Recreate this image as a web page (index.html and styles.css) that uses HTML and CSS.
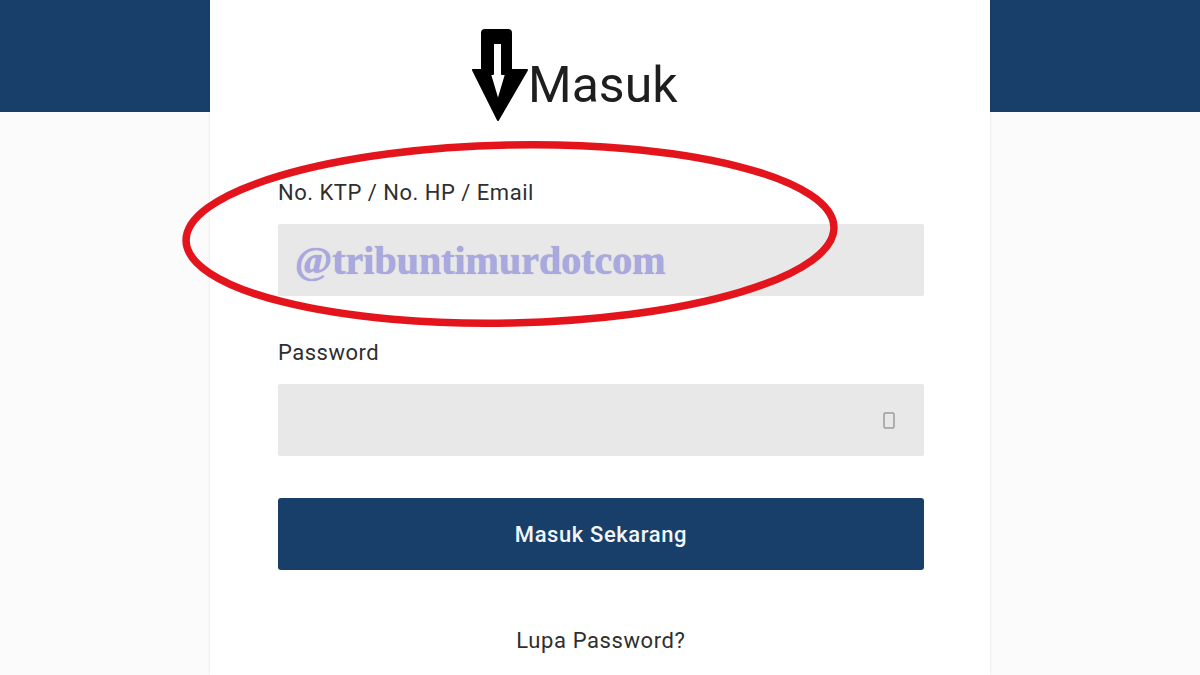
FILE: index.html
```html
<!DOCTYPE html>
<html lang="id">
<head>
    <meta charset="UTF-8">
    <meta name="viewport" content="width=device-width, initial-scale=1.0">
    <title>Masuk</title>
    <link rel="stylesheet" href="styles.css">
</head>
<body>

    <div class="page">
        <div class="card">

            <!-- Title with the pointer arrow -->
            <div class="title-row">
                <svg class="arrow" width="56" height="94" viewBox="0 0 56 94">
                    <path fill-rule="evenodd" fill="#000" stroke="#000" stroke-width="2" stroke-linejoin="round"
                          d="M13 2 H36 Q39 2 39 5 V42 H55 L26 92 L1 42 H10 V5 Q10 2 13 2 Z
                             M21 15 V46 H18 L26 73 L34 46 H30 V15 Z"/>
                </svg>
                <h1>Masuk</h1>
            </div>

            <form class="login-form">
                <label for="akun">No. KTP / No. HP / Email</label>
                <div class="field">
                    <input type="text" id="akun" name="akun" class="watermark" value="@tribuntimurdotcom">
                </div>

                <label for="password">Password</label>
                <div class="field">
                    <input type="password" id="password" name="password">
                    <svg class="pw-icon" width="12" height="17" viewBox="0 0 12 17">
                        <rect x="1" y="1" width="10" height="15" rx="1.5" fill="none" stroke="#9a9a9a" stroke-width="1.5"/>
                    </svg>
                </div>

                <button type="button" class="submit-button">Masuk Sekarang</button>

                <a href="#" class="forgot">Lupa Password?</a>
            </form>

            <!-- Red highlight drawn over the first field -->
            <svg class="highlight" width="680" height="200" viewBox="0 0 680 200">
                <ellipse cx="339" cy="94" rx="324" ry="89" fill="none" stroke="#e3141b" stroke-width="7.5"
                         transform="rotate(-1.2 339 94)"/>
            </svg>
        </div>
    </div>

</body>
</html>
```

FILE: styles.css
```css
body {
    margin: 0;
    font-family: Roboto, "Liberation Sans", sans-serif;
    color: #2b2b2b;
}

.page {
    min-height: 675px;
    background: linear-gradient(#183f69 112px, #fbfbfb 112px);
}

.card {
    position: relative;
    width: 780px;
    min-height: 675px;
    margin: 0 auto;
    box-sizing: border-box;
    padding: 0 66px 0 68px;
    background-color: #fff;
    box-shadow: 0 0 3px rgba(0, 0, 0, 0.1);
}

.title-row {
    display: flex;
    align-items: flex-start;
    padding-left: 194px;
    padding-top: 28px;
    height: 92px;
}

.title-row h1 {
    margin: 27px 0 0 0;
    font-size: 50px;
    line-height: 60px;
    font-weight: 400;
    color: #1e1e1e;
}

.login-form {
    display: flex;
    flex-direction: column;
    padding-top: 60px;
}

.login-form label {
    font-size: 22px;
    line-height: 26px;
    letter-spacing: 0.5px;
    color: #2f2f2f;
    margin-bottom: 18px;
}

.field {
    display: flex;
    align-items: center;
    height: 72px;
    background-color: #e8e8e8;
    border-radius: 2px;
    margin-bottom: 44px;
    padding-right: 29px;
}

.field input {
    flex: 1;
    height: 100%;
    border: none;
    outline: none;
    background: transparent;
    padding: 0 0 0 17px;
    font-size: 20px;
}

.field .watermark {
    font-family: "Liberation Serif", serif;
    font-weight: bold;
    font-size: 40px;
    color: #a9a9df;
    text-shadow: 0 0 1px #9494c8;
}

.pw-icon {
    flex: none;
}

.submit-button {
    height: 72px;
    margin-top: -2px;
    border: none;
    border-radius: 3px;
    background-color: #183f69;
    color: #f2f6fa;
    font-family: inherit;
    font-size: 22px;
    letter-spacing: 0.6px;
    font-weight: 500;
    cursor: pointer;
}

.forgot {
    align-self: center;
    margin-top: 58px;
    font-size: 22px;
    letter-spacing: 0.6px;
    color: #2f2f2f;
    text-decoration: none;
}

.highlight {
    position: absolute;
    left: -39px;
    top: 140px;
    pointer-events: none;
}
```
